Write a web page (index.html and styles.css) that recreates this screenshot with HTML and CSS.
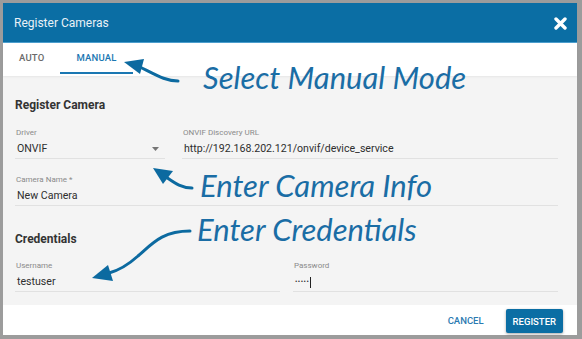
FILE: index.html
```html
<!DOCTYPE html>
<html lang="en">
<head>
    <meta charset="UTF-8">
    <meta name="viewport" content="width=device-width, initial-scale=1.0">
    <title>Register Cameras</title>
    <link rel="stylesheet" href="styles.css">
</head>
<body>
    <div class="dialog">
        <header class="dialog-header">
            <h1>Register Cameras</h1>
            <button class="close-btn" aria-label="Close">
                <svg width="13" height="13" viewBox="0 0 13 13">
                    <path d="M2 2 L11 11 M11 2 L2 11" stroke="#fff" stroke-width="3.4" stroke-linecap="round"/>
                </svg>
            </button>
        </header>

        <nav class="tabs">
            <span class="tab">Auto</span>
            <span class="tab active">Manual</span>
        </nav>

        <main class="dialog-body">
            <h2 class="section-title">Register Camera</h2>
            <div class="row row-driver">
                <div class="field">
                    <label>Driver</label>
                    <div class="value select">ONVIF
                        <svg class="caret" width="7" height="4" viewBox="0 0 7 4"><path d="M0 0 H7 L3.5 4 Z" fill="#757575"/></svg>
                    </div>
                </div>
                <div class="field">
                    <label>ONVIF Discovery URL</label>
                    <div class="value">http://192.168.202.121/onvif/device_service</div>
                </div>
            </div>
            <div class="field field-name">
                <label>Camera Name *</label>
                <div class="value">New Camera</div>
            </div>

            <h2 class="section-title creds-title">Credentials</h2>
            <div class="row row-creds">
                <div class="field">
                    <label>Username</label>
                    <div class="value">testuser</div>
                </div>
                <div class="field">
                    <label>Password</label>
                    <div class="value"><span class="dots">&bull;&bull;&bull;&bull;&bull;</span><span class="cursor"></span></div>
                </div>
            </div>
        </main>

        <footer class="dialog-footer">
            <button class="btn-text">Cancel</button>
            <button class="btn-primary">Register</button>
        </footer>
    </div>

    <!-- callouts drawn over the screenshot -->
    <div class="callouts">
        <svg class="arrows" width="582" height="339" viewBox="0 0 582 339">
            <g fill="none" stroke="#0c6aa0" stroke-width="3" stroke-linecap="round">
                <path d="M178 81 C166 81 158 76 140 67"/>
                <path d="M192 188 C182 188 176 184 166 177"/>
                <path d="M190 231 C162 231 152 244 138 256 C128 265 120 270 109 273"/>
            </g>
            <g fill="#0c6aa0">
                <polygon points="124,62 144,59 140,74"/>
                <polygon points="153,168 173,171 163,184"/>
                <polygon points="92,278 108,265 113,281"/>
            </g>
        </svg>
        <p class="note note-manual">Select Manual Mode</p>
        <p class="note note-info">Enter Camera Info</p>
        <p class="note note-creds">Enter Credentials</p>
    </div>
</body>
</html>
```

FILE: styles.css
```css
body { margin: 0; background: #9c9c9c; font-family: Roboto, "Liberation Sans", sans-serif; }

.dialog { margin: 3px; width: 574px; height: 332px; background: #fff; display: flex; flex-direction: column; }

.dialog-header { height: 39px; background: #0b6ea4; border-bottom: 1px solid #4d9fce; display: flex; align-items: center; justify-content: space-between; padding: 0 10px 0 11px; }
.dialog-header h1 { margin: 0; font-size: 12px; font-weight: 400; color: #e9f1f7; }
.close-btn { background: none; border: 0; padding: 0; width: 13px; height: 13px; margin-top: 2px; }

.tabs { height: 33px; display: flex; background: #fff; box-shadow: 0 1px 2px rgba(0,0,0,0.06); position: relative; z-index: 1; }
.tab { height: 29px; line-height: 29px; padding: 0 16px; font-size: 9.5px; font-weight: 500; text-transform: uppercase; color: #6b6b6b; border-bottom: 2px solid transparent; letter-spacing: 0.2px; }
.tab.active { color: #1a77b2; border-bottom-color: #1a77b2; }

.dialog-body { flex: 1; background: #f4f4f4; padding: 21px 19px 13px 12px; }
.section-title { margin: 0 0 15px; font-size: 12px; line-height: 16px; font-weight: 700; color: #333; }
.creds-title { margin-top: 25px; margin-bottom: 14px; }

.row { display: grid; }
.row-driver { grid-template-columns: 150px 1fr; gap: 17px; }
.row-creds { grid-template-columns: 1fr 1fr; gap: 13px; }

.field { border-bottom: 1px solid #e1e1e1; }
.field-name { margin-top: 16px; }
.field label { display: block; font-size: 8px; line-height: 10px; color: #8a8a8a; margin-bottom: 2px; padding-left: 1px; }
.field .value { height: 18px; line-height: 18px; font-size: 10.6px; color: #2e2e2e; padding-left: 2px; white-space: nowrap; }
.select { display: flex; justify-content: space-between; align-items: center; padding-right: 6px; }
.caret { margin-top: -1px; }
.dots { font-size: 7px; letter-spacing: 0.5px; vertical-align: middle; }
.cursor { display: inline-block; width: 1px; height: 11px; background: #222; vertical-align: middle; margin-left: 1px; }

.dialog-footer { height: 30px; display: flex; justify-content: flex-end; align-items: center; padding-right: 14px; }
.btn-text { background: none; border: 0; padding: 0 10px; margin-right: 12px; font-family: inherit; font-size: 9.5px; font-weight: 500; color: #2a7ab1; text-transform: uppercase; }
.btn-primary { height: 24px; margin-top: 2px; padding: 0 7px; border: 0; border-radius: 2px; background: #0b6ea4; color: #fff; font-family: inherit; font-size: 9.5px; font-weight: 500; text-transform: uppercase; box-shadow: 0 1px 3px rgba(0,0,0,0.35); }

.callouts { position: absolute; top: 0; left: 0; width: 582px; height: 339px; pointer-events: none; z-index: 2; }
.arrows { position: absolute; top: 0; left: 0; }
.note { position: absolute; margin: 0; font-family: Lato, "Open Sans", sans-serif; font-style: italic; font-size: 31px; line-height: 1; color: #1a6da5; white-space: nowrap; }
.note-manual { left: 203px; top: 62px; }
.note-info { left: 200px; top: 170px; }
.note-creds { left: 197px; top: 214px; }
```
